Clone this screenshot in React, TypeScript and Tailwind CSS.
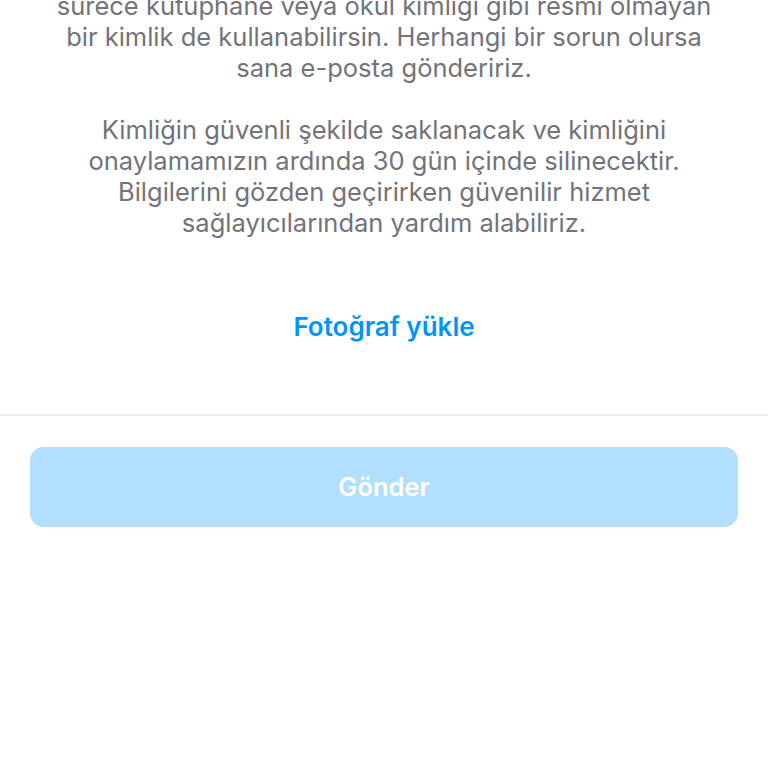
import React from 'react';

const para1 = [
  'sürece kütüphane veya okul kimliği gibi resmi olmayan',
  'bir kimlik de kullanabilirsin. Herhangi bir sorun olursa',
  'sana e-posta göndeririz.',
];

const para2 = [
  'Kimliğin güvenli şekilde saklanacak ve kimliğini',
  'onaylamamızın ardında 30 gün içinde silinecektir.',
  'Bilgilerini gözden geçirirken güvenilir hizmet',
  'sağlayıcılarından yardım alabiliriz.',
];

export default function App() {
  return (
    <div className="w-[768px] h-[768px] overflow-hidden bg-white font-['Inter','Noto_Sans',sans-serif]">
      <div className="-mt-[10px] px-6 text-center text-[25.5px] leading-[31px] text-[#737378]">
        <p>
          {para1.map(l => (
            <span key={l} className="block whitespace-nowrap">{l}</span>
          ))}
        </p>
        <p className="mt-[31px]">
          {para2.map(l => (
            <span key={l} className="block whitespace-nowrap">{l}</span>
          ))}
        </p>
      </div>

      <div className="h-[176px] flex items-center justify-center">
        <button className="text-[26px] font-semibold text-[#0095f6]">Fotoğraf yükle</button>
      </div>

      <div className="h-[2px] bg-[#efefef]" />

      <div className="px-[30px] pt-[31px]">
        <button
          disabled
          className="w-full h-[80px] rounded-[14px] bg-[#b2dffc] text-white text-[25.5px] font-semibold flex items-center justify-center"
        >
          Gönder
        </button>
      </div>
    </div>
  );
}
